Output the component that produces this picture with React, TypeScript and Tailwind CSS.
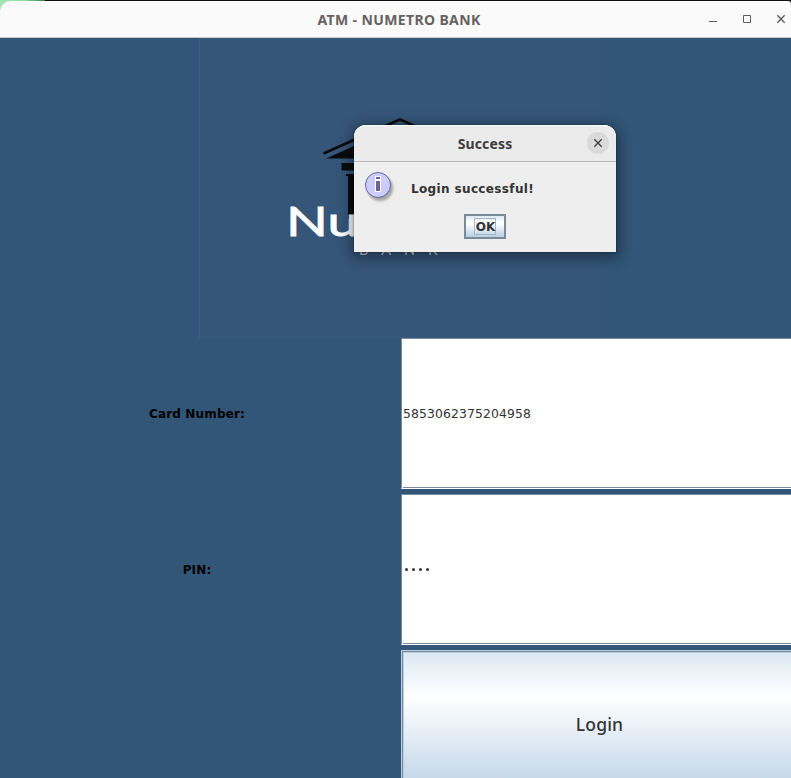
import type { ReactNode } from "react";

function BankLogo() {
  return (
    <svg className="block h-[300px] w-[400px] bg-[#355679]" viewBox="199 38 400 300" role="img">
      <path d="M199.5 338V38.5H599" fill="none" stroke="#3a5f84" />
      <path d="M199.5 337.5H599" stroke="#385c80" strokeOpacity=".5" />
      <path d="M323.5 153.5 400 119.5 476.5 153.5" fill="none" stroke="#0a0b0d" strokeWidth="2.6" />
      <path d="M326 158.5 400 125.5 474 158.5Z" fill="#0a0b0d" />
      <path d="M341.5 163H458V170.5H341.5ZM346 174H454V176H452V219H348V176H346Z" fill="#0a0b0d" />
      <text x="286" y="235.5" fill="#fff" fontFamily="Lato, sans-serif" fontSize="41.5" stroke="#fff" strokeWidth=".8">
        <tspan textLength="72" lengthAdjust="spacingAndGlyphs">Nu</tspan>
      </text>
      <text x="359" y="254.5" fill="#c8cfd7" fontFamily="Lato, sans-serif" fontSize="14.5" letterSpacing="13">BANK</text>
    </svg>
  );
}

function InfoIcon() {
  return (
    <svg className="h-[32px] w-[32px] shrink-0" viewBox="0 0 32 32">
      <defs>
        <filter id="soft" x="-20%" y="-20%" width="150%" height="150%">
          <feGaussianBlur stdDeviation="1.2" />
        </filter>
      </defs>
      <circle cx="16" cy="17" r="13" fill="#777" opacity=".6" filter="url(#soft)" />
      <circle cx="14" cy="14" r="12.5" fill="#ccccff" stroke="#666699" />
      <path d="M11 5h6v16h-6z" fill="#fff" />
      <path d="M12 6h4v2h-4zM12 10h4v10h-4z" fill="#666699" />
    </svg>
  );
}

function SuccessDialog() {
  return (
    <div className="absolute left-[354px] top-[125px] h-[127px] w-[262px] rounded-t-[12px] bg-[#eeeeee] shadow-[0_3px_14px_3px_rgba(0,0,0,0.4),0_0_1px_1px_rgba(0,0,0,0.15)]">
      <div className="relative flex h-[37px] items-center justify-center rounded-t-[12px] border-b border-[#b8b8b8] bg-[#ebebeb] shadow-[inset_0_1px_0_#fafafa]">
        <span className="pt-[2px] font-['Noto_Sans',sans-serif] text-[14px] font-bold leading-none tracking-[0.15px] text-[#3d3d3d]">
          Success
        </span>
        <button className="absolute right-[7px] top-[7px] flex size-[22px] items-center justify-center rounded-full bg-[#dadada]">
          <svg className="size-[10px]" viewBox="0 0 10 10">
            <path d="M1.3 1.3l7.4 7.4M8.7 1.3l-7.4 7.4" stroke="#3d3d3d" strokeWidth="1.3" />
          </svg>
        </button>
      </div>
      <div className="flex h-[52px] pl-[10px] pt-[9px]">
        <InfoIcon />
        <span className="ml-[15px] mt-[11px] font-['DejaVu_Sans',sans-serif] text-[12px] font-bold leading-[14px] tracking-[0.36px] text-[#333]">
          Login successful!
        </span>
      </div>
      <div className="flex">
        <button className="ml-[110px] flex h-[25px] w-[42px] items-center justify-center border-2 border-[#7a8a99] bg-[linear-gradient(#dde8f3,#ffffff_30%,#ffffff_35%,#b8cfe5)]">
          <span className="flex h-[17px] w-[22px] items-center justify-center border border-[#a3b8cc] pl-px font-['DejaVu_Sans',sans-serif] text-[12px] font-bold leading-none text-[#333]">
            OK
          </span>
        </button>
      </div>
    </div>
  );
}

function Label({ children }: { children: ReactNode }) {
  return (
    <div className="flex h-[151px] w-[396px] items-center justify-center pr-[2px] font-['DejaVu_Sans',sans-serif] text-[12px] font-bold tracking-[0.15px] text-black">
      {children}
    </div>
  );
}

function Field({ children }: { children: ReactNode }) {
  return (
    <div className="h-[151px] min-w-0 flex-1 border-l border-t border-[#7a8a99] border-b border-b-white bg-white">
      <div className="ml-px flex h-full items-center border-b border-[#7a8a99] font-['DejaVu_Sans',sans-serif] text-[12.4px] text-[#333]">
        {children}
      </div>
    </div>
  );
}

export default function App() {
  return (
    <div className="relative flex h-[778px] w-[791px] flex-col overflow-hidden bg-[#315677]">
      <div className="h-[38px] bg-[linear-gradient(90deg,#a5e7b0_0,#8fd9a0_25px,#328050_45px,#101014_45px)] pt-px">
        <header className="relative flex h-[37px] items-center justify-center rounded-tl-[11px] rounded-tr-[3px] border-b border-[#c9cccd] bg-[#fafafa] pl-[7px]">
          <h1 className="pt-px font-['Noto_Sans',sans-serif] text-[14px] font-bold leading-none tracking-[0.38px] text-[#66625f]">
            ATM - NUMETRO BANK
          </h1>
          <svg className="absolute right-0 top-0 h-[36px] w-[91px]" viewBox="700 1 91 36" fill="none" stroke="#5d5d5d">
            <path d="M709 21.5h8M743.5 15.5h7v7h-7z" />
            <path d="M777.3 15.3l7.4 7.4M784.7 15.3l-7.4 7.4" strokeWidth="1.4" />
          </svg>
        </header>
      </div>
      <div className="flex h-[300px] pl-[199px]">
        <BankLogo />
      </div>
      <main className="flex flex-col gap-[5px]">
        <div className="flex gap-[5px]">
          <Label>Card Number:</Label>
          <Field>
            <span className="pt-[3px] tracking-[0.12px]">5853062375204958</span>
          </Field>
        </div>
        <div className="flex gap-[5px]">
          <Label>PIN:</Label>
          <Field>
            <span className="flex gap-[4px] pl-[2px]">
              {[0, 1, 2, 3].map((i) => (
                <i key={i} className="size-[3px] rounded-full bg-[#333]" />
              ))}
            </span>
          </Field>
        </div>
        <div className="flex pl-[401px]">
          <button className="h-[151px] w-[396px] shrink-0 border border-[#b8cfe5] bg-[#7a8a99] p-px">
            <span className="flex h-full items-center justify-center border border-[#b8cfe5] bg-[linear-gradient(#dde8f3_0%,#ffffff_30%,#b8cfe5_100%)] pb-[2px] pl-px font-['Noto_Sans',sans-serif] text-[17.5px] font-medium tracking-[0.2px] text-[#333]">
              Login
            </span>
          </button>
        </div>
      </main>
      <SuccessDialog />
    </div>
  );
}
